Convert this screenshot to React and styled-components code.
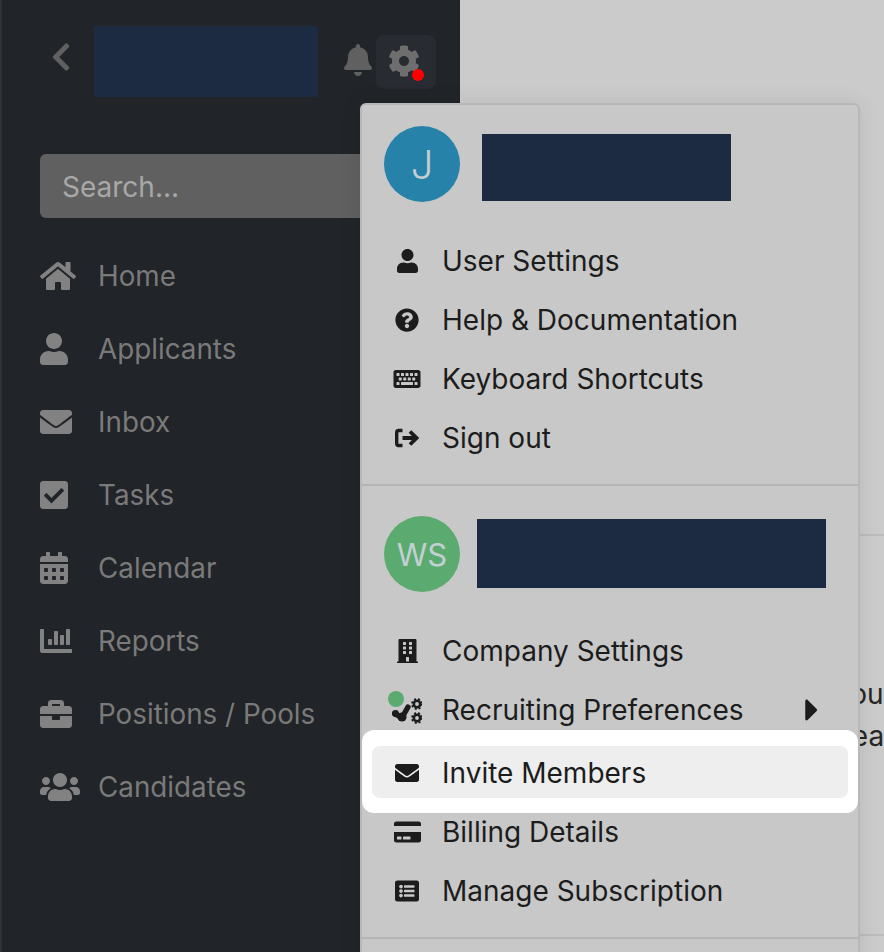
import React from "react";
import styled, { createGlobalStyle } from "styled-components";
import {
  FaBell,
  FaBriefcase,
  FaBuilding,
  FaCalendarAlt,
  FaCaretRight,
  FaChartBar,
  FaCheckSquare,
  FaChevronLeft,
  FaCog,
  FaCreditCard,
  FaEnvelope,
  FaHome,
  FaKeyboard,
  FaListAlt,
  FaQuestionCircle,
  FaUser,
  FaUsers,
} from "react-icons/fa";

const GlobalStyle = createGlobalStyle`
  html, body {
    margin: 0;
    background: #cbcbcb;
  }
  * {
    box-sizing: border-box;
  }
`;

const Page = styled.div`
  position: relative;
  display: flex;
  width: 884px;
  height: 952px;
  overflow: hidden;
  font-family: "Inter", "Liberation Sans", sans-serif;
  font-size: 28px;
`;

const Sidebar = styled.aside`
  flex: 0 0 460px;
  border-left: 2px solid #303336;
  padding-top: 26px;
  background: #212428;
`;

const Header = styled.div`
  display: flex;
  align-items: center;
  padding-left: 49px;
`;

const Back = styled(FaChevronLeft)`
  width: 20px;
  height: 32px;
  margin: -10px 23px 0 0;
  color: #606060;
`;

const Redacted = styled.div`
  flex: none;
  width: ${({ $w }) => $w}px;
  height: ${({ $h }) => $h}px;
  margin-top: ${({ $top }) => $top || 0}px;
  background: #1c2a42;
`;

const Bell = styled(FaBell)`
  width: 28px;
  height: 32px;
  margin: -3px 4px 0 26px;
  color: #606060;
`;

const GearButton = styled.div`
  position: relative;
  display: flex;
  justify-content: center;
  align-items: center;
  width: 60px;
  height: 54px;
  border-radius: 8px;
  background: #282b32;

  svg {
    width: 32px;
    height: 32px;
    margin: -2px 4px 0 0;
    color: #6e6e6e;
  }
`;

const RedDot = styled.span`
  position: absolute;
  left: 36px;
  top: 34px;
  width: 12px;
  height: 12px;
  border-radius: 50%;
  background: #ff0000;
`;

const Search = styled.div`
  display: flex;
  align-items: center;
  width: 400px;
  height: 64px;
  margin: 57px 0 21px 38px;
  padding: 1px 0 0 22px;
  border-radius: 6px;
  background: #606060;
  color: #a8a8a8;
`;

const Nav = styled.nav`
  display: flex;
  flex-direction: column;
  padding-left: 38px;
`;

const NavItem = styled.div`
  display: grid;
  grid-template-columns: 58px 1fr;
  align-items: center;
  height: 73px;
  font-size: 27.8px;
  color: #7a7a7a;

  svg {
    width: ${({ $w }) => $w}px;
    height: 32px;
    color: #828282;
  }
`;

const Main = styled.main`
  flex: 1;
  display: flex;
  flex-direction: column;
  padding-top: 534px;
`;

const Rule = styled.div`
  height: 2px;
  background: #bcbcbc;
`;

const Copy = styled.div`
  margin: 137px 0 177px 375px;
  white-space: nowrap;
  line-height: 42px;
  color: #262626;
`;

const Menu = styled.div`
  position: absolute;
  left: 360px;
  top: 103px;
  bottom: -30px;
  width: 500px;
  border: 2px solid #b8b8b8;
  border-radius: 6px;
  background: #c8c8c8;
  box-shadow: 0 0 22px rgba(0, 0, 0, 0.09);
  color: #1c1c1c;
`;

const Section = styled.div`
  padding: ${({ $top }) => $top}px 0 16px;
  border-bottom: 2px solid #b5b5b5;
`;

const Identity = styled.div`
  display: flex;
  align-items: center;
  gap: ${({ $gap }) => $gap}px;
  padding-left: 22px;
  margin-bottom: 30px;
`;

const Avatar = styled.div`
  flex: none;
  display: flex;
  justify-content: center;
  align-items: center;
  width: 76px;
  height: 76px;
  border-radius: 50%;
  background: ${({ $bg }) => $bg};
  color: #c4cfd2;
  font-size: ${({ $size }) => $size}px;
  font-weight: ${({ $weight }) => $weight};
`;

const Row = styled.div`
  position: relative;
  display: grid;
  grid-template-columns: 46px 1fr auto;
  column-gap: 12px;
  align-items: center;
  height: ${({ $compact }) => ($compact ? 52 : 59)}px;
  padding: ${({ $compact }) => ($compact ? "1px 39px 0 12px" : "0 39px 1px 22px")};
  border-radius: 8px;
  background: ${({ $compact }) => ($compact ? "#eeeeee" : "transparent")};
  color: #1c1c1c;
`;

const RowIcon = styled.span`
  display: flex;
  justify-content: center;
  align-items: center;

  svg {
    width: ${({ $w }) => $w || 24}px;
    height: 24px;
  }
`;

const Caret = styled(FaCaretRight)`
  width: 14px;
  height: 36px;
`;

const Pulse = styled.span`
  position: absolute;
  left: 26px;
  top: 10px;
  width: 16px;
  height: 16px;
  border-radius: 50%;
  background: #5bab70;
`;

const Highlight = styled.div`
  position: relative;
  padding: 16px 10px 15px;
  margin: -10px 0;
  border-radius: 12px;
  background: #ffffff;
`;

const SignOutIcon = () => (
  <svg viewBox="0 0 24 24" fill="none" stroke="#1c1c1c" strokeWidth="3.4">
    <path d="M7.5 4.5 H3.5 Q1.7 4.5 1.7 6.5 V17.5 Q1.7 19.5 3.5 19.5 H7.5" />
    <path d="M7.5 12 H21" strokeWidth="4" />
    <path d="M15 5.5 L21.5 12 L15 18.5" strokeWidth="3.8" />
  </svg>
);

// no stock icon has this shape: one thick branch and two small ring gears
const PrefsIcon = () => (
  <svg viewBox="0 0 30 28" style={{ width: 30, height: 28 }} fill="none">
    <path
      d="M2.5 17.5 L10 21.5 L16 11"
      stroke="#1c1c1c"
      strokeWidth="5.4"
      strokeLinecap="round"
      strokeLinejoin="round"
    />
    <circle cx="10" cy="21" r="4.6" fill="#1c1c1c" />
    <circle cx="3.5" cy="17.5" r="3.4" fill="#1c1c1c" />
    <circle cx="25" cy="8" r="3.2" stroke="#1c1c1c" strokeWidth="2.6" />
    <circle cx="25" cy="8" r="5" stroke="#1c1c1c" strokeWidth="1.8" strokeDasharray="2 2" />
    <circle cx="25" cy="22" r="3.2" stroke="#1c1c1c" strokeWidth="2.6" />
    <circle cx="25" cy="22" r="5" stroke="#1c1c1c" strokeWidth="1.8" strokeDasharray="2 2" />
  </svg>
);

const navItems = [
  [FaHome, "Home", 36],
  [FaUser, "Applicants", 28],
  [FaEnvelope, "Inbox", 32],
  [FaCheckSquare, "Tasks", 28],
  [FaCalendarAlt, "Calendar", 28],
  [FaChartBar, "Reports", 32],
  [FaBriefcase, "Positions / Pools", 32],
  [FaUsers, "Candidates", 40],
];

const userItems = [
  [FaUser, "User Settings", 21],
  [FaQuestionCircle, "Help & Documentation", 24],
  [FaKeyboard, "Keyboard Shortcuts", 28],
  [SignOutIcon, "Sign out", 24],
];

export default function App() {
  return (
    <Page>
      <GlobalStyle />
      <Sidebar>
        <Header>
          <Back />
          <Redacted $w={224} $h={71} />
          <Bell />
          <GearButton>
            <FaCog />
            <RedDot />
          </GearButton>
        </Header>
        <Search>Search...</Search>
        <Nav>
          {navItems.map(([Icon, label, w]) => (
            <NavItem key={label} $w={w}>
              <Icon />
              <span>{label}</span>
            </NavItem>
          ))}
        </Nav>
      </Sidebar>

      <Main>
        <Rule />
        <Copy>
          you
          <br />
          Year
        </Copy>
        <Rule />
      </Main>

      <Menu>
        <Section $top={21}>
          <Identity $gap={22}>
            <Avatar $bg="#2682a8" $size={40} $weight={300}>
              J
            </Avatar>
            <Redacted $w={249} $h={67} $top={6} />
          </Identity>
          {userItems.map(([Icon, label, w]) => (
            <Row key={label}>
              <RowIcon $w={w}>
                <Icon />
              </RowIcon>
              <span>{label}</span>
            </Row>
          ))}
        </Section>
        <Section $top={30}>
          <Identity $gap={17}>
            <Avatar $bg="#5bab70" $size={31} $weight={400}>
              WS
            </Avatar>
            <Redacted $w={349} $h={69} $top={-2} />
          </Identity>
          <Row>
            <RowIcon $w={21}>
              <FaBuilding />
            </RowIcon>
            <span>Company Settings</span>
          </Row>
          <Row>
            <RowIcon $w={30}>
              <PrefsIcon />
            </RowIcon>
            <span>Recruiting Preferences</span>
            <Caret />
            <Pulse />
          </Row>
          <Highlight>
            <Row $compact>
              <RowIcon>
                <FaEnvelope />
              </RowIcon>
              <span>Invite Members</span>
            </Row>
          </Highlight>
          <Row>
            <RowIcon $w={27}>
              <FaCreditCard />
            </RowIcon>
            <span>Billing Details</span>
          </Row>
          <Row>
            <RowIcon>
              <FaListAlt />
            </RowIcon>
            <span>Manage Subscription</span>
          </Row>
        </Section>
      </Menu>
    </Page>
  );
}
